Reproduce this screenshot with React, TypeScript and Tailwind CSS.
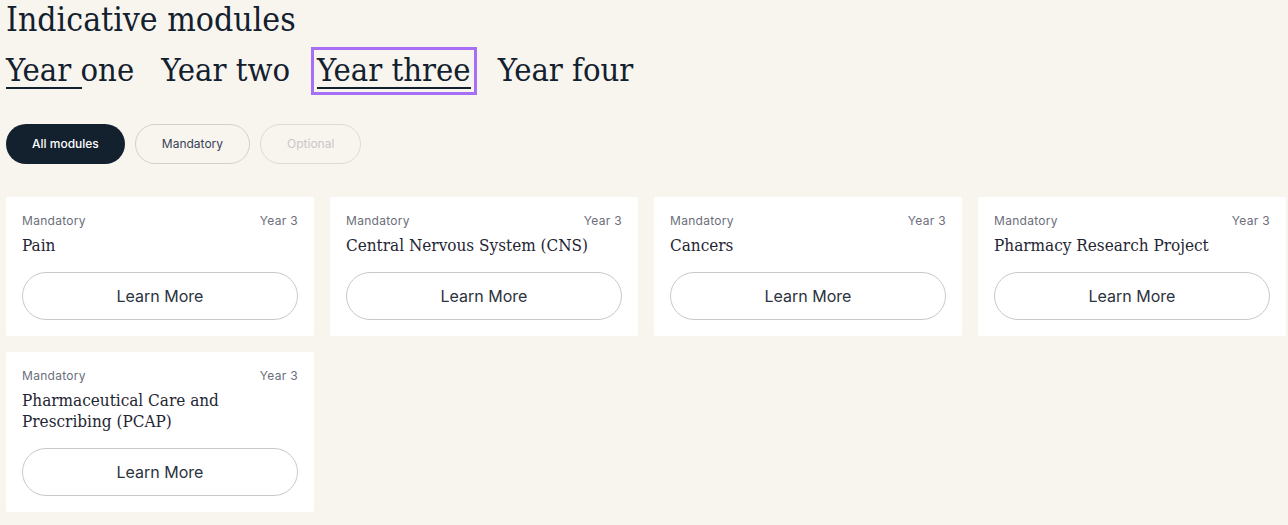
import React from "react";

const serif = "font-['DejaVu_Serif_Condensed','DejaVu_Serif',serif] font-stretch-condensed";
const sans = "font-['Inter',sans-serif]";

const modules = [
  "Pain",
  "Central Nervous System (CNS)",
  "Cancers",
  "Pharmacy Research Project",
  "Pharmaceutical Care and Prescribing (PCAP)",
];

function Card({ title }: { title: string }) {
  return (
    <div className="bg-white rounded-[2px] p-4 flex flex-col">
      <div className={`${sans} flex justify-between text-[12px] leading-4 text-[#6b6e7a] tracking-[0.3px]`}>
        <span>Mandatory</span>
        <span>Year 3</span>
      </div>
      <div className={`${serif} mt-[6px] text-[17px] leading-[21px] text-[#1f2633] pr-6`}>{title}</div>
      <button className={`${sans} mt-4 h-12 w-full rounded-full border border-[#c9c9cc] bg-white text-[16px] text-[#2b3240]`}>
        Learn More
      </button>
    </div>
  );
}

export default function App() {
  return (
    <div className="min-h-[525px] bg-[#f8f5ef] text-[#13202e]">
      <div className="pl-[6px] w-[1286px]">
        <h1 className={`${serif} text-[33.5px] leading-[40px]`}>Indicative modules</h1>
        <div className={`${serif} flex gap-[27px] mt-[13px] text-[32.5px] leading-[34px]`}>
          <span className="relative">
            Year one
            <span className="absolute left-0 top-[34px] h-[2px] w-[76px] bg-[#13202e]" />
          </span>
          <span>Year two</span>
          <span className="relative border-b-2 border-[#13202e] outline-[3px] outline-solid outline-[#a66ff5] outline-offset-[3px]">
            Year three
          </span>
          <span>Year four</span>
        </div>
        <div className={`${sans} flex gap-[10px] mt-[35px] text-[12px]`}>
          <button className="h-10 px-[26px] rounded-full bg-[#13202e] text-white font-medium">All modules</button>
          <button className="h-10 px-[26px] rounded-full border border-[#d3d1cf] text-[#3a4256]">Mandatory</button>
          <button className="h-10 px-[26px] rounded-full border border-[#dedbd7] text-[#c8c8c8]">Optional</button>
        </div>
        <div className="grid grid-cols-4 gap-4 mt-[33px] w-[1280px] items-start pb-3">
          {modules.map((m) => (
            <Card key={m} title={m} />
          ))}
        </div>
      </div>
    </div>
  );
}
